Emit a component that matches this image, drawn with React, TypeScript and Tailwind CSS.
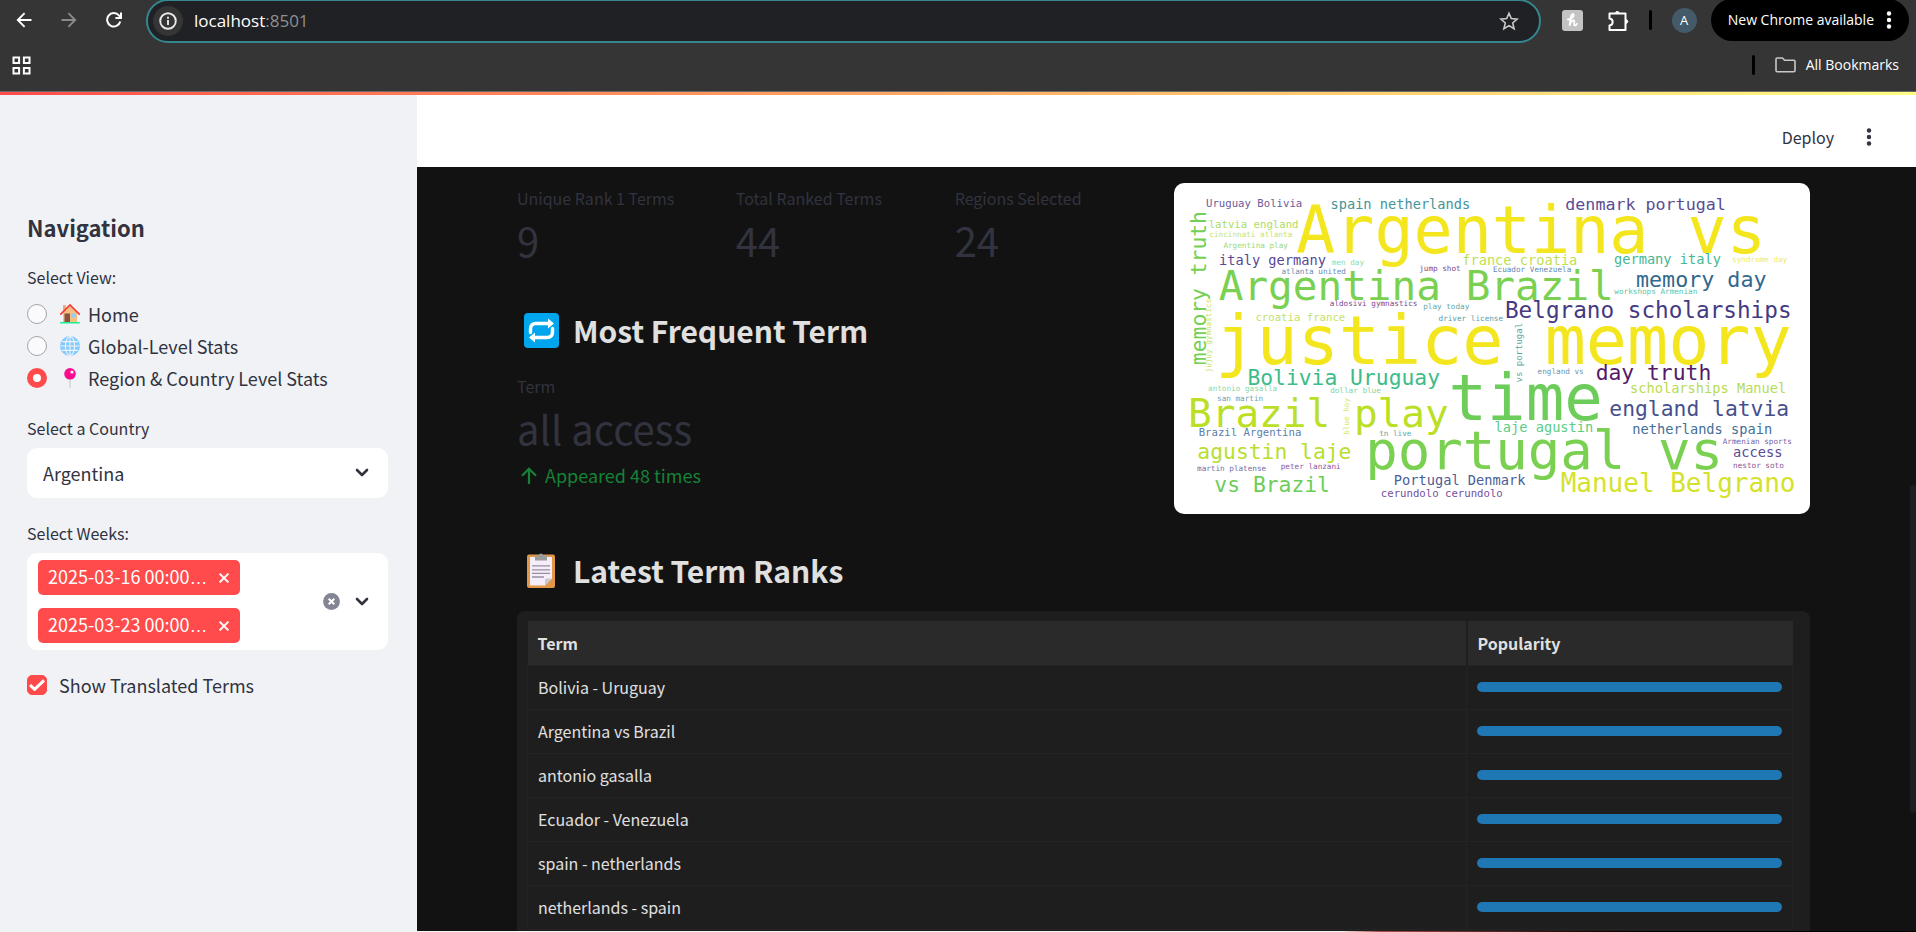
import React from "react";

const UI = "font-['Noto_Sans_CJK_SC',sans-serif]";
const CHROME = "font-['Open_Sans','Noto_Sans',sans-serif]";

const TERMS = [
  "Bolivia - Uruguay",
  "Argentina vs Brazil",
  "antonio gasalla",
  "Ecuador - Venezuela",
  "spain - netherlands",
  "netherlands - spain",
];

type Word = { t: string; x: number; y: number; s: number; c: string; up?: boolean };

const WORDS: Word[] = [
  { t: "Uruguay Bolivia", x: 96, y: 71, s: 32, c: "#6c5a9c" },
  { t: "spain netherlands", x: 469, y: 77, s: 41, c: "#45949b" },
  { t: "Argentina vs", x: 366, y: 209, s: 195, c: "#f4e61e" },
  { t: "memory truth", x: 95, y: 546, s: 64, c: "#73d055", up: true },
  { t: "latvia england", x: 104, y: 136, s: 32, c: "#b0dc60" },
  { t: "cincinnati atlanta", x: 106, y: 163, s: 23, c: "#c4e36c" },
  { t: "Argentina play", x: 148, y: 196, s: 23, c: "#94d97c" },
  { t: "italy germany", x: 135, y: 247, s: 41, c: "#564a94" },
  { t: "men day", x: 473, y: 246, s: 23, c: "#90dca0" },
  { t: "atlanta united", x: 322, y: 272, s: 23, c: "#6c8cae" },
  { t: "jump shot", x: 735, y: 263, s: 23, c: "#7c4a8c" },
  { t: "france croatia", x: 864, y: 245, s: 41, c: "#c0e050" },
  { t: "Argentina Brazil", x: 134, y: 351, s: 123, c: "#7ad151" },
  { t: "aldosivi gymnastics", x: 467, y: 369, s: 23, c: "#7a4890" },
  { t: "play today", x: 747, y: 378, s: 23, c: "#62a8a8" },
  { t: "driver license", x: 793, y: 413, s: 23, c: "#5c9caa" },
  { t: "croatia france", x: 244, y: 414, s: 32, c: "#c4e264" },
  { t: "jujuy gymnastics", x: 112, y: 568, s: 23, c: "#c8e468", up: true },
  { t: "justice memory", x: 124, y: 542, s: 205, c: "#f4e61e" },
  { t: "Bolivia Uruguay", x: 220, y: 606, s: 64, c: "#3dbc88" },
  { t: "antonio gasalla", x: 102, y: 625, s: 23, c: "#8cd8a4" },
  { t: "dollar blue", x: 468, y: 629, s: 23, c: "#80d4a4" },
  { t: "san martin", x: 129, y: 653, s: 23, c: "#70a0b8" },
  { t: "Brazil play", x: 42, y: 730, s: 118, c: "#bbdf27" },
  { t: "blue hoy", x: 524, y: 755, s: 23, c: "#d0e870", up: true },
  { t: "time", x: 823, y: 710, s: 192, c: "#6ccd5a" },
  { t: "Brazil Argentina", x: 74, y: 758, s: 32, c: "#5c80a8" },
  { t: "tn live", x: 615, y: 758, s: 23, c: "#60a8a8" },
  { t: "agustin laje", x: 70, y: 826, s: 64, c: "#b8de30" },
  { t: "portugal vs", x: 573, y: 856, s: 162, c: "#7ad151" },
  { t: "martin platense", x: 69, y: 862, s: 23, c: "#7070a8" },
  { t: "peter lanzani", x: 320, y: 858, s: 23, c: "#8c589c" },
  { t: "vs Brazil", x: 121, y: 925, s: 64, c: "#6ccd5a" },
  { t: "Portugal Denmark", x: 659, y: 904, s: 41, c: "#4a6096" },
  { t: "cerundolo cerundolo", x: 620, y: 940, s: 32, c: "#7450a0" },
  { t: "denmark portugal", x: 1173, y: 81, s: 50, c: "#5a4c94" },
  { t: "germany italy", x: 1319, y: 243, s: 41, c: "#44b894" },
  { t: "syndrome day", x: 1673, y: 237, s: 23, c: "#eeec64" },
  { t: "Ecuador Venezuela", x: 956, y: 268, s: 23, c: "#6488b0" },
  { t: "memory day", x: 1385, y: 313, s: 65, c: "#31688e" },
  { t: "workshops Armenian", x: 1320, y: 333, s: 23, c: "#60c4a8" },
  { t: "Belgrano scholarships", x: 992, y: 406, s: 68, c: "#443a83" },
  { t: "vs portugal", x: 1043, y: 598, s: 27, c: "#58a8a0", up: true },
  { t: "england vs", x: 1090, y: 574, s: 23, c: "#6c94b4" },
  { t: "day truth", x: 1264, y: 592, s: 64, c: "#541a68" },
  { t: "scholarships Manuel", x: 1367, y: 629, s: 41, c: "#b8dc54" },
  { t: "england latvia", x: 1305, y: 698, s: 64, c: "#46508c" },
  { t: "laje agustin", x: 961, y: 745, s: 41, c: "#5ccc84" },
  { t: "netherlands spain", x: 1374, y: 753, s: 41, c: "#447098" },
  { t: "Armenian sports", x: 1645, y: 781, s: 23, c: "#7860a4" },
  { t: "access", x: 1676, y: 821, s: 41, c: "#584c90" },
  { t: "nestor soto", x: 1676, y: 854, s: 23, c: "#8c5494" },
  { t: "Manuel Belgrano", x: 1159, y: 925, s: 78, c: "#d4e22c" },
];

function WordCloud() {
  return (
    <svg
      viewBox="0 0 1908 993"
      role="img"
      aria-label="Word cloud of ranked terms"
      className="block w-full rounded-[10px] bg-white font-['DejaVu_Sans_Mono',monospace]"
    >
      {WORDS.map((w) => (
        <text
          key={w.t}
          fontSize={w.s}
          fill={w.c}
          transform={w.up ? `translate(${w.x} ${w.y}) rotate(-90)` : `translate(${w.x} ${w.y})`}
        >
          {w.t}
        </text>
      ))}
    </svg>
  );
}

function Dots({ className }: { className: string }) {
  return (
    <svg viewBox="0 0 6 20" className={className} fill="currentColor" aria-hidden="true">
      <circle cx="3" cy="3.5" r="2.2" />
      <circle cx="3" cy="10" r="2.2" />
      <circle cx="3" cy="16.5" r="2.2" />
    </svg>
  );
}

function Chevron() {
  return (
    <svg viewBox="0 0 14 10" className="h-[10px] w-[14px]" fill="none" stroke="#31333f" strokeWidth="2.6" strokeLinecap="round" strokeLinejoin="round" aria-hidden="true">
      <path d="M2 2l5 5 5-5" />
    </svg>
  );
}

function BrowserBar() {
  return (
    <header className={`${CHROME} flex h-[92px] shrink-0 flex-col border-b border-[#6a6a6a] bg-[#353535] text-white`}>
      <div className="-mt-px flex h-11 items-start">
        <nav className="flex h-[42px] w-[146px] items-center gap-[29px] pl-4">
          <button aria-label="Back">
            <svg viewBox="0 0 16 16" className="h-4 w-4" fill="none" stroke="#fff" strokeWidth="1.9">
              <path d="M15.5 8H2M8.6 1.2L1.8 8l6.8 6.8" />
            </svg>
          </button>
          <button aria-label="Forward">
            <svg viewBox="0 0 16 16" className="h-4 w-4" fill="none" stroke="#8a8a8a" strokeWidth="1.9">
              <path d="M.5 8H14M7.4 1.2L14.2 8l-6.8 6.8" />
            </svg>
          </button>
          <button aria-label="Reload">
            <svg viewBox="0 0 16 16" className="h-4 w-4" fill="none" stroke="#fff" strokeWidth="2">
              <path d="M14.3 9.6A6.7 6.7 0 1 1 12.9 3.4L14.6 5.4" />
              <path d="M15 .6v5.400H9.400" />
            </svg>
          </button>
        </nav>
        <div className="flex h-11 flex-1 items-center rounded-full border-2 border-[#35878f] bg-[#202124] pr-5 pl-[5px]">
          <button aria-label="Site information" className="flex h-[30px] w-[30px] items-center justify-center rounded-full bg-[#353535]">
            <svg viewBox="0 0 18 18" className="h-[18px] w-[18px]" fill="none" stroke="#e8e8e8" strokeWidth="1.9">
              <circle cx="9" cy="9" r="7.8" />
              <path d="M9 8v5M9 4.800v1.900" />
            </svg>
          </button>
          <div className="flex-1 pl-[11px] text-[17px] leading-6">
            <span>localhost</span>
            <span className="text-[#8f8f8f]">:8501</span>
          </div>
          <button aria-label="Bookmark this tab">
            <svg viewBox="0 0 20 20" className="h-5 w-5" fill="none" stroke="#c8c8c8" strokeWidth="1.6">
              <path d="M10 2.200l2.300 5.400 5.900.5-4.500 3.900 1.400 5.700L10 14.600l-5.100 3.100 1.400-5.700-4.500-3.900 5.900-.5z" />
            </svg>
          </button>
        </div>
        <div className="flex h-[42px] items-center pl-[21px]">
          <svg viewBox="0 0 21 21" className="h-[21px] w-[21px]" role="img" aria-label="Honey">
            <rect width="21" height="21" rx="3" fill="#c3c3c3" />
            <path d="M5.800 9.400C8.600 9.400 12 7 11.700 4.900 11.400 3.400 9.500 4.300 9 6.600L7.500 15.600C8.700 12.200 10.400 10.200 11.800 10.500 13.200 10.800 11.500 14 12.100 15.100 12.700 16 14.200 15 15 13.900" fill="none" stroke="#fff" strokeWidth="1.800" strokeLinecap="round" />
          </svg>
          <button aria-label="Extensions" className="ml-[25px]">
            <svg viewBox="0 0 21 21" className="h-[21px] w-[21px]" fill="none" stroke="#fff" strokeWidth="2" strokeLinejoin="round">
              <path d="M1.500 3.500H17.500V20H1.500V15.500c4.200-.3 4.200-6.700 0-7z" />
              <path d="M7.400 2.800a2 2 0 0 1 3.800 0zM18.400 9.600a2 2 0 0 1 0 3.800z" fill="#fff" strokeWidth="1" />
            </svg>
          </button>
          <span className="ml-5 h-5 w-[3px] rounded-full bg-black" />
          <button className="ml-5 flex h-[25px] w-[25px] items-center justify-center rounded-full bg-[#455a68] text-[13px] leading-none">A</button>
          <button className="mr-[7px] ml-[14px] flex h-[42px] items-center gap-3 rounded-full bg-black pr-[17px] pl-[17px] text-sm whitespace-nowrap">
            New Chrome available
            <Dots className="h-5 w-[6px]" />
          </button>
        </div>
      </div>
      <div className="flex flex-1 items-center justify-between pr-[17px] pb-1 pl-3">
        <button aria-label="Apps">
          <svg viewBox="0 0 19 19" className="h-[19px] w-[19px]" fill="none" stroke="#fff" strokeWidth="2">
            <path d="M1.500 1.500h5.600v5.600H1.500zM11.900 1.500h5.600v5.600h-5.600zM1.500 11.900h5.600v5.600H1.500zM11.900 11.900h5.600v5.600h-5.600z" />
          </svg>
        </button>
        <div className="flex items-center">
          <span className="h-5 w-[3px] rounded-full bg-black" />
          <button className="ml-5 flex items-center gap-[10px] text-sm leading-5">
            <svg viewBox="0 0 21 16" className="h-4 w-[21px]" fill="none" stroke="#c8c8c8" strokeWidth="1.6" strokeLinejoin="round">
              <path d="M1 2.200Q1 1 2.200 1H7.400L9.600 3.200H18.800Q20 3.200 20 4.400V13.600Q20 14.800 18.800 14.800H2.200Q1 14.800 1 13.600z" />
            </svg>
            All Bookmarks
          </button>
        </div>
      </div>
    </header>
  );
}

function HouseIcon() {
  return (
    <svg viewBox="0 0 20 20" className="h-5 w-5" aria-hidden="true">
      <rect x="3" y="1" width="3" height="7" fill="#e8b07a" />
      <path d="M3 9l7-7 7 7v9H3z" fill="#f3c184" />
      <rect x="4.5" y="9.5" width="5.5" height="8.5" fill="#8a5340" />
      <rect x="11.5" y="9.5" width="4" height="4" fill="#8fcdfb" />
      <path d="M.8 10.2L10 1l9.2 9.2" fill="none" stroke="#f93a37" strokeWidth="1.7" strokeLinecap="round" />
      <rect y="18" width="20" height="1.4" rx=".7" fill="#17f095" />
    </svg>
  );
}

function GlobeIcon() {
  return (
    <svg viewBox="0 0 20 20" className="h-5 w-5" fill="#83cbff" aria-hidden="true">
      <circle cx="10" cy="10" r="10" />
      <g fill="none" stroke="#f0f2f6" strokeWidth="1.1">
        <ellipse cx="10" cy="10" rx="4.6" ry="9.4" />
        <path d="M10 .5v19M.5 10h19M2 5.6h16M2 14.4h16" />
      </g>
    </svg>
  );
}

function PinIcon() {
  return (
    <svg viewBox="0 0 20 20" className="h-5 w-5" aria-hidden="true">
      <path d="M9.4 10h1.3v9.4q-.6.8-1.3 0z" fill="#cfcfd4" />
      <circle cx="10" cy="5.8" r="5.8" fill="#fb0b8e" />
      <circle cx="12" cy="4" r="1.6" fill="#fff" />
    </svg>
  );
}

const VIEWS = [
  { label: "Home", icon: <HouseIcon /> },
  { label: "Global-Level Stats", icon: <GlobeIcon /> },
  { label: "Region & Country Level Stats", icon: <PinIcon /> },
];

function Sidebar() {
  const [view, setView] = React.useState(2);
  const [translated, setTranslated] = React.useState(true);
  const [country, setCountry] = React.useState("Argentina");
  return (
    <aside className="w-[417px] shrink-0 bg-[#f0f2f6] pt-[119px] pr-[29px] pl-[27px] text-[#31333f]">
      <h2 className="text-[22px] leading-8 font-bold">Navigation</h2>
      <fieldset className="mt-5">
        <legend className="mb-[7px] text-base leading-7">Select View:</legend>
        {VIEWS.map((v, i) => (
          <label key={v.label} className="flex h-8 items-center text-[18px] leading-8">
            <input
              type="radio"
              name="view"
              checked={view === i}
              onChange={() => setView(i)}
              className="mr-[13px] h-5 w-5 appearance-none rounded-full border border-[#a3a5ab] bg-[#fafafc] checked:border-[6px] checked:border-[#ff4b4b] checked:bg-white"
            />
            {v.icon}
            <span className="ml-2">{v.label}</span>
          </label>
        ))}
      </fieldset>
      <label htmlFor="country" className="mt-5 block text-base leading-7">
        Select a Country
      </label>
      <div className="mt-[6px] grid items-center">
        <select
          id="country"
          value={country}
          onChange={(e) => setCountry(e.target.value)}
          className="col-start-1 row-start-1 h-[50px] w-full appearance-none rounded-[10px] bg-white px-4 text-[18px]"
        >
          <option>Argentina</option>
        </select>
        <span className="pointer-events-none col-start-1 row-start-1 mr-[19px] justify-self-end">
          <Chevron />
        </span>
      </div>
      <p id="weeks" className="mt-[21px] text-base leading-7">
        Select Weeks:
      </p>
      <div role="group" aria-labelledby="weeks" className="mt-[6px] flex items-center rounded-[10px] bg-white py-[7px] pr-[19px] pl-[11px]">
        <div className="flex flex-1 flex-col items-start gap-[13px]">
          {["2025-03-16 00:00", "2025-03-23 00:00"].map((w) => (
            <span key={w} className="flex h-[35px] w-[202px] items-center justify-between rounded-[5px] bg-[#ff4b4b] pr-[10px] pl-[10px] text-[18px] leading-[35px] text-white">
              <span>
                {w}
                <span className="font-['Liberation_Sans',sans-serif]">…</span>
              </span>
              <button aria-label={`Remove ${w}`}>
                <svg viewBox="0 0 12 12" className="h-3 w-3" stroke="#fff" strokeWidth="2">
                  <path d="M1.6 1.6l8.8 8.8M10.4 1.6l-8.8 8.8" />
                </svg>
              </button>
            </span>
          ))}
        </div>
        <button aria-label="Clear all" className="mr-[15px]">
          <svg viewBox="0 0 17 17" className="h-[17px] w-[17px]">
            <circle cx="8.5" cy="8.5" r="8.4" fill="#838594" />
            <path d="M5.7 5.7l5.6 5.6M11.3 5.7l-5.6 5.6" stroke="#fff" strokeWidth="2" />
          </svg>
        </button>
        <button aria-label="Open weeks">
          <Chevron />
        </button>
      </div>
      <label className="mt-[19px] flex h-8 items-center text-[18px] leading-8">
        <span className="mr-3 grid items-center justify-items-center">
          <input
            type="checkbox"
            checked={translated}
            onChange={() => setTranslated(!translated)}
            className="col-start-1 row-start-1 h-5 w-5 appearance-none rounded-[5px] border border-[#a3a5ab] bg-white checked:border-[#ff4b4b] checked:bg-[#ff4b4b]"
          />
          <svg viewBox="0 0 16 12" className="pointer-events-none col-start-1 row-start-1 h-3 w-4" fill="none" stroke="#fff" strokeWidth="3">
            <path d="M1 6l4.6 4.4L15 1.4" />
          </svg>
        </span>
        Show Translated Terms
      </label>
    </aside>
  );
}

function Metric({ label, value }: { label: string; value: string }) {
  return (
    <div className="text-[#31333f]">
      <p className="text-base leading-[30px]">{label}</p>
      <p className="text-[40px] leading-[54px]">{value}</p>
    </div>
  );
}

function RepeatIcon() {
  return (
    <svg viewBox="0 0 35 35" className="h-[35px] w-[35px]" aria-hidden="true">
      <rect width="35" height="35" rx="4" fill="#00a6ed" />
      <path d="M6.5 19.5v-3.6q0-5.4 5.4-5.4H24" fill="none" stroke="#fff" strokeWidth="3.4" strokeLinecap="round" />
      <path d="M28.5 15.500v3.600q0 5.400-5.400 5.400H11" fill="none" stroke="#fff" strokeWidth="3.400" strokeLinecap="round" />
      <path d="M24 5.600l6 4.900-6 4.900zM11 19.600l-6 4.900 6 4.900z" fill="#fff" />
    </svg>
  );
}

function ClipboardIcon() {
  return (
    <svg viewBox="0 0 28 35" className="h-[35px] w-7" aria-hidden="true">
      <rect y="1.500" width="28" height="33.500" rx="2" fill="#e19747" />
      <path d="M3 4h22v21.500L18 32.500H3z" fill="#f3eef8" />
      <path d="M25 25.500L18 32.500V27q0-1.500 1.500-1.500z" fill="#cdc4d6" />
      <path d="M8 2.500h4a2 2 0 0 1 4 0h4V7.500H8z" fill="#9b9b9b" />
      <path d="M5 12.800h18M5 16.800h18M5 20.300h18M5 24h12" stroke="#998ea4" strokeWidth="1.300" />
    </svg>
  );
}

function Main() {
  return (
    <div className="flex min-w-0 flex-1 flex-col bg-[#121212]">
      <div className="flex h-[75px] shrink-0 items-center justify-end bg-white pt-[14px] pr-11 text-[#31333f]">
        <button className="text-base leading-7">Deploy</button>
        <button aria-label="Main menu" className="ml-8">
          <Dots className="h-5 w-[6px]" />
        </button>
      </div>
      <div className="flex min-h-0 flex-1 justify-between overflow-hidden">
        <main className="min-w-0 flex-1 pt-4 pr-[100px] pl-[100px]">
          <div className="grid grid-cols-2 items-start gap-5">
            <section>
              <div className="grid grid-cols-3 gap-5">
                <Metric label="Unique Rank 1 Terms" value="9" />
                <Metric label="Total Ranked Terms" value="44" />
                <Metric label="Regions Selected" value="24" />
              </div>
              <h2 className="mt-[41px] mb-[19px] flex items-center pl-[7px] text-[30px] leading-[44px] font-bold text-[#e0e0e0]">
                <RepeatIcon />
                <span className="ml-[14px]">Most Frequent Term</span>
              </h2>
              <Metric label="Term" value="all access" />
              <p className="mt-[6px] flex items-center gap-2 pl-1 text-[18px] leading-7 text-[#158237]">
                <svg viewBox="0 0 16 17" className="h-[17px] w-4" fill="none" stroke="currentColor" strokeWidth="2.200" aria-hidden="true">
                  <path d="M8 17V2M1 8.800L8 1.800l7 7" />
                </svg>
                Appeared 48 times
              </p>
            </section>
            <WordCloud />
          </div>
          <h2 className="mt-[34px] mb-[19px] flex items-center pl-[10px] text-[30px] leading-[44px] font-bold text-[#e0e0e0]">
            <ClipboardIcon />
            <span className="ml-[18px]">Latest Term Ranks</span>
          </h2>
          <div className="rounded-[8px] bg-[#1e1e1e] py-[10px] pr-[17px] pl-[10px]">
            <table className="w-full table-fixed border-collapse text-left text-base leading-6 text-[#e0e0e0]">
              <colgroup>
                <col />
                <col className="w-[326px]" />
              </colgroup>
              <thead>
                <tr className="h-11 bg-[#2a2a2a]">
                  <th className="border-r-2 border-[#1e1e1e] px-[10px] font-bold">Term</th>
                  <th className="px-[10px] font-bold">Popularity</th>
                </tr>
              </thead>
              <tbody>
                {TERMS.map((t) => (
                  <tr key={t} className="h-11">
                    <td className="border border-[#232323] px-[10px]">{t}</td>
                    <td className="border border-[#232323] px-[10px]">
                      <div className="h-[10px] rounded-full bg-[#1f77b4]" />
                    </td>
                  </tr>
                ))}
              </tbody>
            </table>
          </div>
        </main>
        <div className="mt-[318px] h-[328px] w-[6px] shrink-0 rounded-full bg-[#1d1d22]" />
      </div>
    </div>
  );
}

export default function App() {
  return (
    <div className={`${UI} flex h-screen flex-col overflow-hidden`}>
      <BrowserBar />
      <div className="flex min-h-0 flex-1 flex-col">
        <div className="z-10 -mb-[3px] h-[3px] shrink-0 bg-linear-to-r from-[#ff4b4b] to-[#fffd80]" />
        <div className="flex min-h-0 flex-1">
          <Sidebar />
          <Main />
        </div>
      </div>
      <div className="h-px shrink-0 bg-linear-to-r from-[#f3f3f3] from-70% via-[#a85048] via-72% to-black to-88%" />
    </div>
  );
}
